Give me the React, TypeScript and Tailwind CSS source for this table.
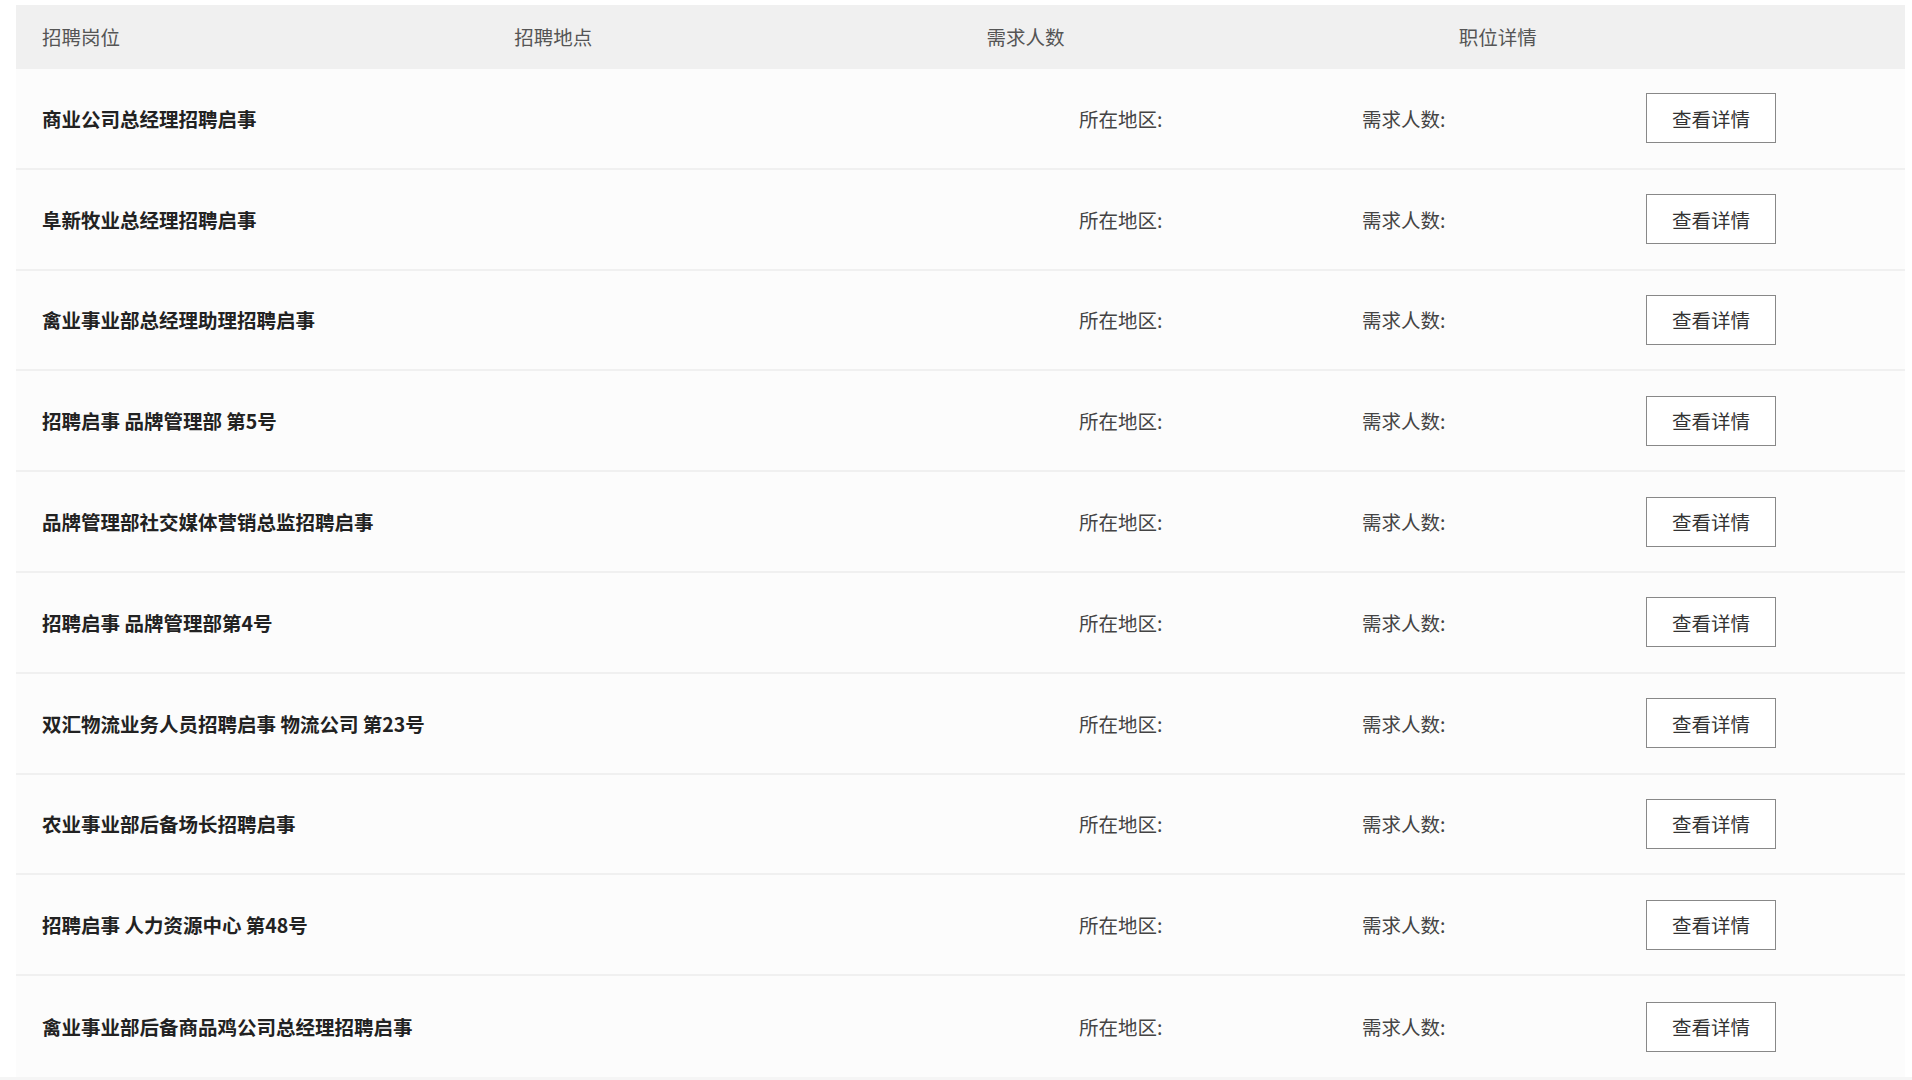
const jobs = [
  "商业公司总经理招聘启事",
  "阜新牧业总经理招聘启事",
  "禽业事业部总经理助理招聘启事",
  "招聘启事 品牌管理部 第5号",
  "品牌管理部社交媒体营销总监招聘启事",
  "招聘启事 品牌管理部第4号",
  "双汇物流业务人员招聘启事 物流公司 第23号",
  "农业事业部后备场长招聘启事",
  "招聘启事 人力资源中心 第48号",
  "禽业事业部后备商品鸡公司总经理招聘启事",
];

const headers = ["招聘岗位", "招聘地点", "需求人数", "职位详情"];

export default function App() {
  return (
    <div
      className="min-h-screen bg-[#f5f5f5]"
      style={{ fontFamily: '"Microsoft YaHei", "Noto Sans CJK SC", "Noto Sans", sans-serif' }}
    >
      <div className="bg-white pt-[5px] pl-[16px] pr-[7px]">
        <div className="grid h-[64px] grid-cols-4 items-center bg-[#f0f0f0] text-[19.5px] text-[#555]">
          {headers.map((h) => (
            <div className="pl-[26px]" key={h}>
              {h}
            </div>
          ))}
        </div>

        {jobs.map((job) => (
          <div
            className="grid h-[100.8px] grid-cols-[1063px_283px_284px_1fr] items-center border-b-2 border-[#f0f0f0] bg-[#fcfcfc] last:border-b-0"
            key={job}
          >
            <div className="pl-[26px] text-[19.5px] font-bold text-[#222]">{job}</div>
            <div className="text-[19.5px] text-[#444]">所在地区:</div>
            <div className="text-[19.5px] text-[#444]">需求人数:</div>
            <div>
              <button
                className="h-[50px] w-[130px] border border-[#888] bg-white text-[19.5px] text-[#333]"
                type="button"
              >
                查看详情
              </button>
            </div>
          </div>
        ))}
      </div>
    </div>
  );
}
